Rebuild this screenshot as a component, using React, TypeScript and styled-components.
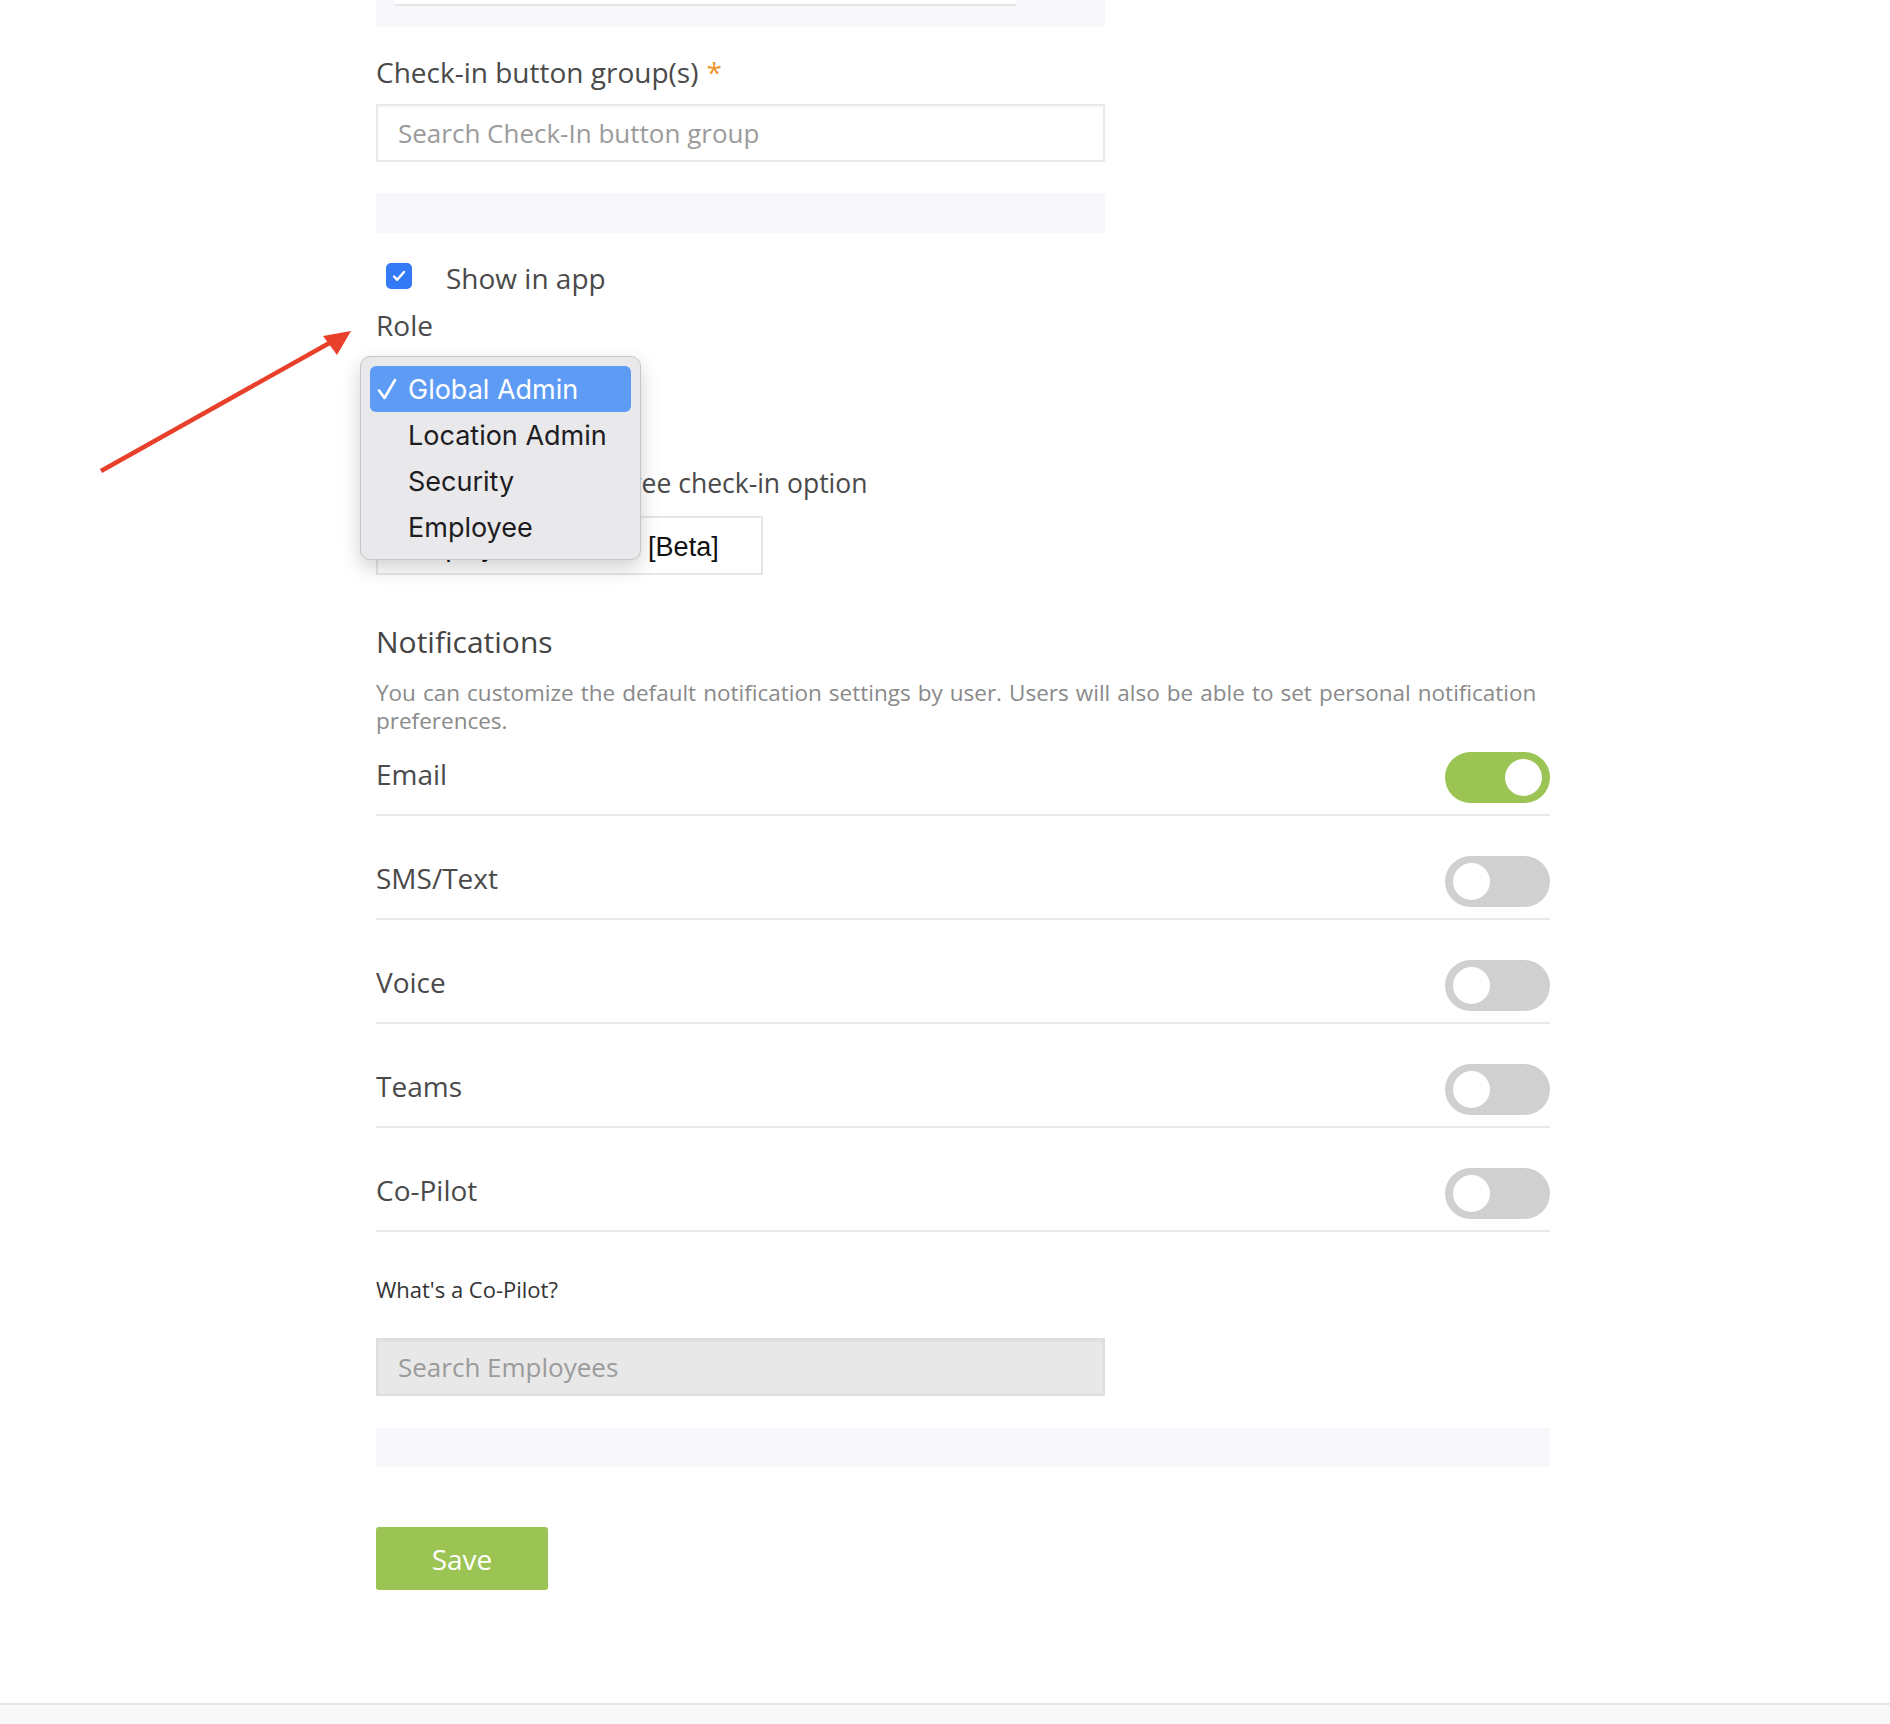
import React from 'react';
import styled, { createGlobalStyle } from 'styled-components';

const GlobalStyle = createGlobalStyle`
  body {
    margin: 0;
    background: #fff;
    font-family: "Open Sans", "Liberation Sans", sans-serif;
    color: #4a4a4a;
  }
  * { box-sizing: border-box; }
`;

const Page = styled.div`
  position: relative;
  min-height: 1724px;
  display: flex;
  flex-direction: column;
`;

const Form = styled.main`
  width: 1174px;
  margin-left: 376px;
  display: flex;
  flex-direction: column;
  align-items: flex-start;
`;

const Panel = styled.div<{ $wide?: boolean; $h: number }>`
  width: ${(p) => (p.$wide ? '1174px' : '729px')};
  height: ${(p) => p.$h}px;
  background: #f8f8fc;
`;

const TopPanel = styled(Panel)`
  padding-left: 19px;
`;

const CutInput = styled.div`
  width: 621px;
  height: 6px;
  background: #fff;
  border-bottom: 2px solid #e6e6e6;
`;

const FieldLabel = styled.label<{ $mt: number; $size?: number }>`
  display: block;
  margin-top: ${(p) => p.$mt}px;
  font-size: ${(p) => p.$size ?? 28}px;
  line-height: 38px;
  color: #4a4a4a;
  white-space: nowrap;
`;

const Required = styled.span`
  color: #f0952d;
  margin-left: 8px;
`;

const TextInput = styled.input<{ $disabled?: boolean }>`
  display: block;
  width: 729px;
  height: 58px;
  margin-top: ${(p) => (p.$disabled ? 34 : 13)}px;
  padding: 0 20px;
  border: 2px solid ${(p) => (p.$disabled ? '#dedede' : '#e9e9e9')};
  box-shadow: inset 0 2px 2px rgba(0, 0, 0, 0.03);
  background: ${(p) => (p.$disabled ? '#e8e8e8' : '#fff')};
  font-family: "Open Sans", sans-serif;
  font-size: 26px;
  color: #555;
  outline: none;
  &::placeholder {
    color: #9b9b9b;
  }
`;

const CheckRow = styled.label`
  display: flex;
  align-items: center;
  margin-top: 26px;
  font-size: 28px;
  line-height: 38px;
  color: #4a4a4a;
`;

const CheckBox = styled.span`
  width: 26px;
  height: 26px;
  margin-left: 10px;
  margin-right: 34px;
  margin-bottom: 4px;
  border-radius: 5px;
  background: #3479f6;
  display: flex;
  align-items: center;
  justify-content: center;
`;

const RoleArea = styled.div`
  position: relative;
  height: 120px;
  width: 729px;
  z-index: 2;
`;

const Menu = styled.ul`
  position: absolute;
  left: -16px;
  top: 12px;
  width: 281px;
  margin: 0;
  padding: 9px 9px;
  list-style: none;
  background: #e9e8eb;
  border: 1px solid #c6c6c8;
  border-radius: 10px;
  box-shadow: 0 8px 20px rgba(0, 0, 0, 0.18);
  font-family: Inter, "Liberation Sans", sans-serif;
`;

const MenuItem = styled.li<{ $selected?: boolean }>`
  position: relative;
  height: 46px;
  padding-left: 38px;
  display: flex;
  align-items: center;
  border-radius: 6px;
  font-size: 27px;
  color: ${(p) => (p.$selected ? '#fff' : '#1d1d1f')};
  background: ${(p) => (p.$selected ? '#5e9bf5' : 'transparent')};
`;

const Tick = styled.span`
  position: absolute;
  left: 5px;
  top: 5px;
  display: flex;
`;

const BetaSelect = styled.div`
  width: 387px;
  height: 59px;
  margin-top: 14px;
  padding: 3px 0 0 27px;
  display: flex;
  align-items: center;
  border: 2px solid #e6e6e6;
  font-family: "Liberation Sans", Arial, sans-serif;
  font-size: 27px;
  color: #111;
  white-space: nowrap;
`;

const SectionTitle = styled.h2`
  margin: 47px 0 0;
  font-size: 30px;
  line-height: 40px;
  font-weight: 400;
  color: #444;
`;

const Description = styled.p`
  margin: 17px 0 0;
  width: 1174px;
  font-size: 22.5px;
  word-spacing: 1.2px;
  line-height: 28px;
  color: #8a8a8a;
`;

const NotifList = styled.div`
  width: 1174px;
`;

const NotifRow = styled.div`
  display: flex;
  align-items: center;
  justify-content: space-between;
  padding: 40px 0 11px;
  border-bottom: 2px solid #e8e8e8;
  &:first-child {
    padding-top: 17px;
  }
`;

const RowLabel = styled.span`
  font-size: 28px;
  line-height: 38px;
  margin-bottom: 7px;
  color: #4a4a4a;
`;

const Toggle = styled.span<{ $on?: boolean }>`
  width: 105px;
  height: 51px;
  border-radius: 26px;
  padding: 0 8px;
  display: flex;
  align-items: center;
  justify-content: ${(p) => (p.$on ? 'flex-end' : 'flex-start')};
  background: ${(p) => (p.$on ? '#9bc454' : '#d0d0d0')};
`;

const Knob = styled.span`
  width: 37px;
  height: 37px;
  border-radius: 50%;
  background: #fff;
`;

const HelpText = styled.div`
  margin-top: 42px;
  font-size: 22px;
  line-height: 30px;
  color: #333;
`;

const SaveButton = styled.button`
  margin-top: 60px;
  width: 172px;
  height: 63px;
  border: none;
  border-radius: 3px;
  background: #9bc454;
  color: #fff;
  font-family: "Open Sans", sans-serif;
  font-size: 28px;
  cursor: pointer;
`;

const Footer = styled.footer`
  margin-top: 113px;
  height: 21px;
  border-top: 2px solid #e6e6e6;
  background: #f8f8f8;
`;

const Annotation = styled.svg`
  position: absolute;
  left: 0;
  top: 0;
  pointer-events: none;
  z-index: 3;
`;

const roles = ['Global Admin', 'Location Admin', 'Security', 'Employee'];
const channels = [
  { name: 'Email', on: true },
  { name: 'SMS/Text', on: false },
  { name: 'Voice', on: false },
  { name: 'Teams', on: false },
  { name: 'Co-Pilot', on: false },
];

export default function App() {
  return (
    <Page>
      <GlobalStyle />
      <Form>
        <TopPanel $h={27}>
          <CutInput />
        </TopPanel>

        <FieldLabel $mt={26}>
          Check-in button group(s)<Required>*</Required>
        </FieldLabel>
        <TextInput placeholder="Search Check-In button group" />
        <Panel $h={40} style={{ marginTop: 31 }} />

        <CheckRow>
          <CheckBox>
            <svg width="16" height="16" viewBox="0 0 16 16">
              <path d="M3 8.5l3.2 3.3L13 4" fill="none" stroke="#fff" strokeWidth="2.4" strokeLinecap="round" strokeLinejoin="round" />
            </svg>
          </CheckBox>
          Show in app
        </CheckRow>

        <FieldLabel $mt={9}>Role</FieldLabel>
        <RoleArea>
          <Menu>
            {roles.map((r, i) => (
              <MenuItem key={r} $selected={i === 0}>
                {i === 0 && (
                  <Tick>
                    <svg width="24" height="36" viewBox="0 0 24 36">
                      <path d="M4 19.5l5.5 7.5L20 9" fill="none" stroke="#fff" strokeWidth="2.6" strokeLinecap="round" strokeLinejoin="round" />
                    </svg>
                  </Tick>
                )}
                {r}
              </MenuItem>
            ))}
          </Menu>
        </RoleArea>

        <FieldLabel $mt={0} $size={26.5}>Select default employee check-in option</FieldLabel>
        <BetaSelect>Employee Check-In [Beta]</BetaSelect>

        <SectionTitle>Notifications</SectionTitle>
        <Description>
          You can customize the default notification settings by user. Users will also be able to set personal
          notification preferences.
        </Description>

        <NotifList>
          {channels.map((c) => (
            <NotifRow key={c.name}>
              <RowLabel>{c.name}</RowLabel>
              <Toggle $on={c.on}>
                <Knob />
              </Toggle>
            </NotifRow>
          ))}
        </NotifList>

        <HelpText>What's a Co-Pilot?</HelpText>
        <TextInput $disabled placeholder="Search Employees" />
        <Panel $wide $h={39} style={{ marginTop: 32 }} />

        <SaveButton>Save</SaveButton>
      </Form>
      <Footer />

      <Annotation width="400" height="500" viewBox="0 0 400 500">
        <line x1="101" y1="471" x2="333" y2="341" stroke="#e8402a" strokeWidth="4.5" />
        <polygon points="351,331 323,336 337,355" fill="#e8402a" />
      </Annotation>
    </Page>
  );
}
